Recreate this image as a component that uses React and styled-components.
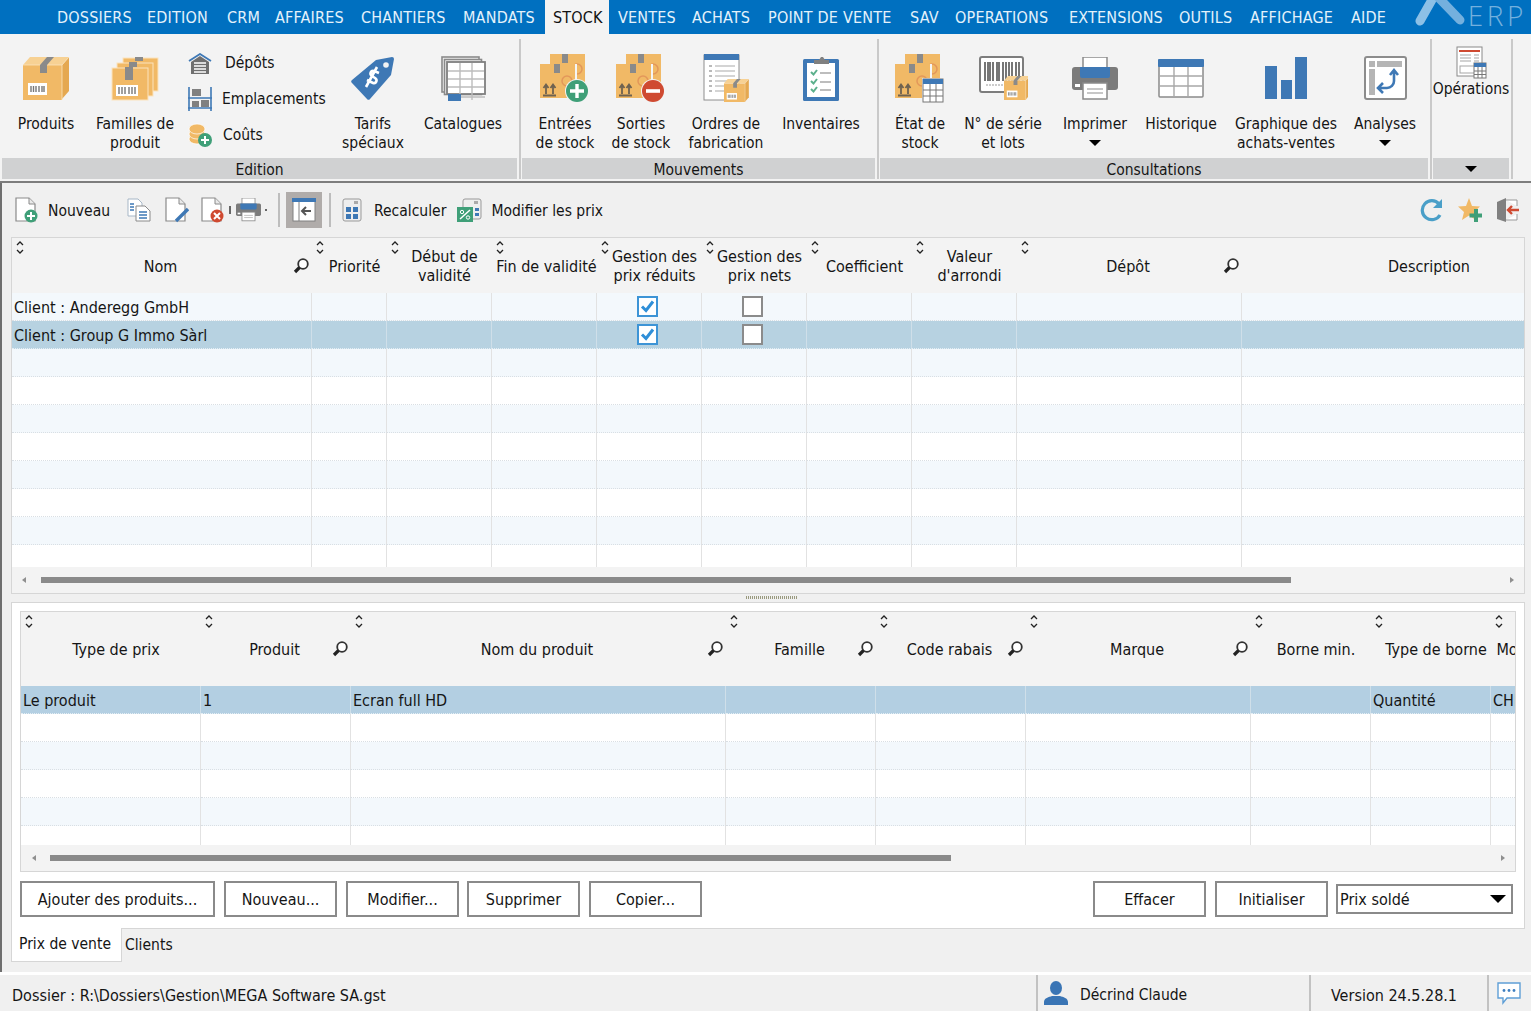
import React from "react";
import styled, { createGlobalStyle } from "styled-components";

const Global = createGlobalStyle`
  html, body { margin: 0; padding: 0; height: 100%; overflow: hidden; background: #f0f0f0; }
  * { box-sizing: border-box; }
  body {
    font-family: "DejaVu Sans Condensed", "DejaVu Sans", sans-serif;
    font-stretch: condensed;
    font-size: 16px;
    color: #151515;
  }
`;

const Page = styled.div`
  width: 1531px;
  height: 1011px;
  display: flex;
  flex-direction: column;
  overflow: hidden;
`;

const MenuBar = styled.nav`
  height: 34px;
  flex: none;
  background: #0070c0;
  display: flex;
  padding-left: 50px;
  overflow: hidden;
`;
const MenuItem = styled.div`
  flex: none;
  width: ${(p) => p.$w}px;
  padding-left: ${(p) => (p.$active ? 8 : 7)}px;
  margin-right: ${(p) => (p.$active ? 2 : 0)}px;
  line-height: 36px;
  letter-spacing: 0.2px;
  white-space: nowrap;
  color: ${(p) => (p.$active ? "#111" : "#e4f2fb")};
  background: ${(p) => (p.$active ? "#f3f3f3" : "transparent")};
`;
const Logo = styled.div`
  margin-left: auto;
  height: 34px;
  display: flex;
  align-items: flex-start;
  overflow: hidden;
  padding-right: 4px;
  color: #74b0de;
`;
const LogoText = styled.span`
  font-family: "Open Sans", sans-serif;
  font-stretch: normal;
  font-size: 28px;
  line-height: 31px;
  font-weight: 300;
  letter-spacing: 3.6px;
`;

const Ribbon = styled.div`
  height: 149px;
  flex: none;
  background: #f3f3f3;
  display: flex;
  padding: 0 0 2px 2px;
  border-bottom: 2px solid #7d7d7d;
  font-size: 15.5px;
`;
const Group = styled.section`
  display: flex;
  flex-direction: column;
  width: ${(p) => p.$w}px;
  margin-right: 2px;
  flex: none;
`;
const Separator = styled.i`
  display: block;
  width: 2px;
  height: 140px;
  margin: 5px 1px 0 0;
  background: #c9c9c9;
  flex: none;
`;
const GroupBody = styled.div`
  height: 124px;
  display: flex;
  padding-left: ${(p) => p.$pl || 0}px;
`;
const GroupCaption = styled.div`
  height: 21px;
  background: #d0d1d2;
  text-align: center;
  line-height: 24px;
`;
const Item = styled.div`
  width: ${(p) => p.$w}px;
  flex: none;
  display: flex;
  flex-direction: column;
  align-items: center;
  padding-top: ${(p) => (p.$top ? 12 : 20)}px;
`;
const IconSlot = styled.div`
  height: ${(p) => (p.$h ? p.$h : 48)}px;
  display: flex;
  align-items: center;
  justify-content: center;
  margin-bottom: ${(p) => (p.$h ? 1 : 13)}px;
`;
const ItemLabel = styled.div`
  text-align: center;
  line-height: 19px;
  white-space: pre-line;
`;
const Caret = styled.span`
  display: block;
  width: 0;
  height: 0;
  margin: ${(p) => p.$m || "6px auto 0"};
  border-left: 6px solid transparent;
  border-right: 6px solid transparent;
  border-top: 6px solid #000;
`;
const Stack = styled.div`
  width: 153px;
  flex: none;
  padding: 11px 0 0 8px;
  display: flex;
  flex-direction: column;
`;
const StackRow = styled.div`
  height: 36px;
  display: flex;
  align-items: center;
`;
const StackIcon = styled.div`
  width: 24px;
  display: flex;
  justify-content: center;
  margin-right: ${(p) => p.$mr}px;
`;

const Main = styled.main`
  flex: 1;
  min-height: 0;
  border-left: 2px solid #6f6f6f;
  padding: 0 6px 0 9px;
  display: flex;
  flex-direction: column;
  background: #f0f0f0;
`;
const Toolbar = styled.div`
  height: 54px;
  flex: none;
  display: flex;
  align-items: center;
  padding: 0 5px 0 4px;
  font-size: 15.5px;
`;
const ToolIcon = styled.div`
  display: flex;
  align-items: center;
  justify-content: center;
  flex: none;
  width: ${(p) => p.$w}px;
  margin-left: ${(p) => (p.$auto ? "auto" : `${p.$ml || 0}px`)};
`;
const ToolText = styled.span`
  margin-left: ${(p) => p.$ml}px;
  padding-top: 2px;
  white-space: nowrap;
`;
const ToolSep = styled.i`
  display: block;
  flex: none;
  width: 2px;
  height: ${(p) => p.$h || 34}px;
  margin-left: ${(p) => p.$ml}px;
  background: ${(p) => p.$c || "#bdbdbd"};
`;
const ToolActive = styled.div`
  flex: none;
  width: 36px;
  height: 36px;
  margin-left: ${(p) => p.$ml}px;
  background: #b0acaa;
  display: flex;
  align-items: center;
  justify-content: center;
`;

const GridFrame = styled.div`
  border: 1px solid #d6d6d6;
  background: #f3f3f3;
  overflow: hidden;
  flex: none;
  height: ${(p) => p.$h}px;
  display: flex;
  flex-direction: column;
`;
const GridRow = styled.div`
  display: grid;
  grid-template-columns: ${(p) => p.$cols};
  flex: none;
`;
const HeadCell = styled.div`
  position: relative;
  height: ${(p) => p.$h}px;
  padding: 0 ${(p) => (p.$search ? 13 : 0)}px 0 ${(p) => p.$pl || 10}px;
  display: flex;
  align-items: center;
  justify-content: center;
  text-align: center;
  line-height: 19px;
  white-space: pre;
  background: #f3f3f3;
`;
const HeadLabel = styled.span`
  position: relative;
  top: ${(p) => (p.$shift ? 1 : 0)}px;
`;
const SortMark = styled.svg`
  position: absolute;
  left: 4px;
  top: 3px;
`;
const SearchMark = styled.svg`
  position: absolute;
  right: 3px;
  top: 50%;
  margin-top: -8px;
`;
const Rows = styled.div`
  height: ${(p) => p.$h}px;
  overflow: hidden;
  flex: none;
`;
const Cell = styled.div`
  height: 28px;
  line-height: 30px;
  padding: ${(p) => (p.$center ? "0 4px 0 0" : "0 0 0 2px")};
  white-space: nowrap;
  overflow: hidden;
  display: flex;
  align-items: ${(p) => (p.$center ? "center" : "flex-start")};
  justify-content: ${(p) => (p.$center ? "center" : "flex-start")};
  border-right: 1px solid ${(p) => (p.$sel ? "#cfdfe9" : "#e2e2e2")};
  border-bottom: 1px dotted ${(p) => (p.$sel ? "#e4eef4" : "#d9dfe4")};
  background: ${(p) => (p.$sel ? p.$sel : p.$alt ? "#f3f8fc" : "#ffffff")};
`;
const Check = styled.span`
  width: 21px;
  height: 21px;
  display: block;
  background: #fff;
  border: 2px solid ${(p) => (p.$on ? "#3d94d6" : "#8b8b8b")};
`;
const ScrollRow = styled.div`
  flex: 1;
  display: flex;
  align-items: center;
  padding: 0 ${(p) => p.$pr}px 0 ${(p) => p.$pl}px;
  background: #f3f3f3;
`;
const ScrollTrack = styled.div`
  flex: 1;
  height: 6px;
  margin: 0 ${(p) => p.$mr}px 0 ${(p) => p.$ml}px;
`;
const ScrollThumb = styled.div`
  width: ${(p) => p.$w}px;
  height: 6px;
  background: #8a8a8a;
`;
const Arrow = styled.span`
  width: 0;
  height: 0;
  border-top: 3px solid transparent;
  border-bottom: 3px solid transparent;
  border-${(p) => (p.$left ? "right" : "left")}: 4px solid #8f8f8f;
`;
const Splitter = styled.div`
  height: 8px;
  flex: none;
  display: flex;
  justify-content: center;
`;
const Grip = styled.span`
  width: 52px;
  height: 3px;
  margin: 2px 0 0 7px;
  background: repeating-linear-gradient(90deg, #9a9a7f 0 1px, transparent 1px 2px);
`;

const Panel = styled.div`
  height: 327px;
  flex: none;
  border: 1px solid #d6d6d6;
  background: #fff;
  padding: 8px 8px 0 8px;
  display: flex;
  flex-direction: column;
`;
const Actions = styled.div`
  display: flex;
  margin-top: 9px;
  align-items: flex-start;
`;
const Btn = styled.button`
  font: inherit;
  font-stretch: condensed;
  color: #151515;
  width: ${(p) => p.$w}px;
  height: 36px;
  margin-right: ${(p) => p.$mr}px;
  margin-left: ${(p) => p.$ml || 0}px;
  background: #fff;
  border: 2px solid #8a8a8a;
  padding: 0;
  flex: none;
`;
const Select = styled.div`
  width: 177px;
  height: 30px;
  flex: none;
  margin-top: 3px;
  background: #fff;
  border: 2px solid #8a8a8a;
  padding: 0 5px 0 2px;
  display: flex;
  align-items: center;
  justify-content: space-between;
`;
const SelectCaret = styled.span`
  width: 0;
  height: 0;
  border-left: 8px solid transparent;
  border-right: 8px solid transparent;
  border-top: 8px solid #000;
`;
const Tabs = styled.div`
  flex: 1;
  display: flex;
  align-items: flex-start;
  font-size: 15.5px;
`;
const Tab = styled.div`
  height: ${(p) => (p.$active ? 34 : 32)}px;
  line-height: 32px;
  padding: ${(p) => (p.$active ? "0 0 0 7px" : "0 0 0 3px")};
  margin-top: ${(p) => (p.$active ? "-1px" : 0)};
  background: ${(p) => (p.$active ? "#fff" : "transparent")};
  border: ${(p) => (p.$active ? "1px solid #d6d6d6" : "none")};
  border-top: none;
  ${(p) => p.$active && "width: 111px; white-space: nowrap;"}
`;

const StatusBar = styled.footer`
  height: 39px;
  flex: none;
  border-top: 3px solid #fff;
  background: #f0f0f0;
  display: flex;
  align-items: center;
  padding-left: 12px;
`;
const StatusCell = styled.div`
  height: 36px;
  flex: none;
  width: ${(p) => p.$w}px;
  display: flex;
  align-items: center;
  padding-left: ${(p) => p.$pl}px;
  gap: 12px;
  border-left: 2px solid #c2c2c2;
  white-space: nowrap;
`;
const StatusPath = styled.div`
  flex: none;
  width: 1024px;
  padding-top: 4px;
  white-space: nowrap;
`;
const StatusText = styled.span`
  padding-top: 4px;
  font-size: ${(p) => p.$size || 16}px;
`;

const Z = { o: "#f1b966", ol: "#f7d193", od: "#e5a850", g: "#8a8a8a", b: "#3e78b5", gr: "#3f9f78", r: "#cf4a31" };

function Svg({ w, h, children, vb }) {
  return (
    <svg width={w} height={h} viewBox={vb || `0 0 ${w} ${h}`} style={{ display: "block" }}>
      {children}
    </svg>
  );
}

function Carton({ x = 0, y = 0, s = 1 }) {
  return (
    <g transform={`translate(${x} ${y}) scale(${s})`}>
      <path fill={Z.ol} d="M0 8 7 0h39l-7 8z" />
      <path fill={Z.od} d="M39 8l7-8v34l-7 8z" />
      <rect y="8" width="39" height="35" fill={Z.o} />
      <path stroke="#fbe3bd" strokeWidth=".8" fill="none" d="M0 8h39l7-8M39 8v35" />
      <path fill={Z.g} d="M17 8l7-8h7l-7 8v8h-7z" />
      <rect x="5" y="26" width="19" height="12" fill="#fff" />
      <path stroke="#777" strokeWidth="1.400" d="M8 29v6M10.500 29v6M13 29v6M16 29v6M19 29v6M21 29v6" />
    </g>
  );
}
const ProductIcon = () => (
  <Svg w={48} h={48}>
    <Carton x={1} y={3} />
  </Svg>
);
const FamilyIcon = () => (
  <Svg w={50} h={48}>
    <rect x="13" y="4" width="35" height="33" fill={Z.o} stroke="#fbe3bd" />
    <rect x="25" y="3" width="8" height="4" fill={Z.g} />
    <rect x="7" y="9" width="36" height="33" fill={Z.o} stroke="#fbe3bd" />
    <rect x="19" y="8" width="8" height="5" fill={Z.g} />
    <rect x="2" y="14" width="36" height="32" fill={Z.o} stroke="#fbe3bd" />
    <rect x="15" y="13" width="8" height="13" fill={Z.g} />
    <rect x="6" y="31" width="22" height="11" fill="#fff" />
    <path stroke="#777" strokeWidth="1.400" d="M9 33v7M12 33v7M15 33v7M19 33v7M22 33v7M25 33v7" />
  </Svg>
);
function TwinBoxes() {
  return (
    <g>
      <rect x="10" y="0" width="35" height="35" fill={Z.o} />
      <rect x="22" y="0" width="6" height="9" fill={Z.g} />
      <circle cx="37" cy="15" r="5" fill="none" stroke="#e3975a" strokeWidth="1.500" />
      <rect x="0" y="10" width="37" height="35" fill="#f5f5f5" />
      <rect x="0" y="10" width="35" height="34" fill={Z.o} />
      <rect x="14" y="10" width="6" height="9" fill={Z.g} />
      <circle cx="27" cy="27" r="5" fill="none" stroke="#e3975a" strokeWidth="1.500" />
      <path stroke="#6f6250" strokeWidth="1.800" fill="none" d="M6 40V31M3.500 34 6 30.500 8.500 34M13 40V31M10.500 34 13 30.500 15.500 34M3 41.500h13" />
    </g>
  );
}
const EntryIcon = () => (
  <Svg w={50} h={49}>
    <TwinBoxes />
    <circle cx="37" cy="37" r="12" fill="#f3f3f3" />
    <circle cx="37" cy="37" r="11" fill={Z.gr} />
    <path stroke="#fff" strokeWidth="3.400" d="M37 30v14M30 37h14" />
  </Svg>
);
const ExitIcon = () => (
  <Svg w={50} h={49}>
    <TwinBoxes />
    <circle cx="37" cy="37" r="12" fill="#f3f3f3" />
    <circle cx="37" cy="37" r="11" fill={Z.r} />
    <path stroke="#fff" strokeWidth="3.600" d="M30 37h14" />
  </Svg>
);
const StateIcon = () => (
  <Svg w={50} h={49}>
    <TwinBoxes />
    <rect x="27" y="24" width="23" height="25" fill="#f3f3f3" />
    <rect x="28" y="25" width="20" height="23" fill="#fff" stroke="#777" />
    <rect x="28" y="25" width="20" height="5" fill={Z.b} />
    <path stroke="#777" d="M35 30v18M41 30v18M28 36h20M28 42h20" />
  </Svg>
);
const OrdersIcon = () => (
  <Svg w={46} h={48}>
    <rect x="1" y="1" width="35" height="45" fill="#fff" stroke="#8e8e8e" />
    <rect x="1" y="0" width="35" height="6" fill={Z.b} />
    <path stroke="#777" strokeWidth="1.200" d="M6 12h3M6 17h3M6 22h3M6 27h3M6 32h3M6 37h3" />
    <path stroke="#aaa" strokeWidth="1.200" d="M12 12h20M12 17h20M12 22h20M12 27h12M12 32h10M12 37h10" />
    <Carton x={21} y={25} s={0.54} />
  </Svg>
);
const ClipboardIcon = () => (
  <Svg w={37} h={45}>
    <rect x="0" y="3" width="36" height="42" rx="1.500" fill={Z.b} />
    <rect x="4" y="7" width="28" height="34" fill="#fff" />
    <path fill="#808080" d="M11 8V4h5l2-3h2l2 3h4v4z" />
    <path stroke="#5cb08c" strokeWidth="2" fill="none" d="M8 16l2.500 2.500L14 14M8 25l2.500 2.500L14 23M8 33l2.500 2.500L14 31" />
    <path stroke="#a8a8a8" strokeWidth="1.400" d="M17 17h11M17 26h11M17 34h11" />
  </Svg>
);
const BarcodeIcon = () => (
  <Svg w={49} h={44}>
    <rect x="1" y="1" width="43" height="35" rx="2" fill="#fff" stroke="#7d7d7d" strokeWidth="2" />
    <path stroke="#3d3d3d" strokeWidth="1.400" d="M6 6v19M9 6v19M11 6v19M14 6v19M18 6v19M20 6v19M24 6v19M27 6v19M30 6v19M33 6v19M37 6v19M40 6v19" />
    <path stroke="#9a9a9a" strokeWidth="1.200" d="M7 29h24" strokeDasharray="2 1" />
    <Carton x={25} y={20} s={0.56} />
  </Svg>
);
const PrinterIcon = ({ s = 46 }) => (
  <Svg w={s} h={(s * 43) / 46} vb="0 0 46 43">
    <rect x="11" y="0" width="24" height="14" fill="#fff" stroke="#8a8a8a" strokeWidth="1.500" />
    <rect x="0" y="10" width="46" height="23" rx="3" fill="#7b7b7b" />
    <path fill={Z.b} d="M8 10h30v9a2 2 0 0 1-2 2H10a2 2 0 0 1-2-2z" />
    <rect x="3" y="27" width="5" height="3" fill="#fff" />
    <rect x="11" y="26" width="24" height="16" fill="#fff" stroke="#8a8a8a" strokeWidth="1.500" />
    <path stroke="#b5b5b5" strokeWidth="1.500" d="M15 32h16M15 36h16" />
  </Svg>
);
const TableIcon = () => (
  <Svg w={46} h={39}>
    <rect x="1" y="1" width="44" height="37" rx="1" fill="#fff" stroke="#8a8a8a" strokeWidth="1.500" />
    <rect x="0" y="0" width="46" height="8" rx="1" fill={Z.b} />
    <path stroke="#a8a8a8" strokeWidth="1.400" d="M16 8v30M30 8v30M1 17h44M1 27h44" />
  </Svg>
);
const BarsIcon = () => (
  <Svg w={42} h={42}>
    <rect x="0" y="9" width="12" height="33" fill={Z.b} />
    <rect x="16" y="23" width="11" height="19" fill={Z.b} />
    <rect x="30" y="0" width="12" height="42" fill={Z.b} />
  </Svg>
);
const AnalysisIcon = () => (
  <Svg w={43} h={44}>
    <rect x="1" y="1" width="41" height="42" rx="2" fill="#fff" stroke="#8c8c8c" strokeWidth="2" />
    <rect x="5" y="5" width="6" height="6" fill="#b5b5b5" />
    <rect x="13" y="5" width="25" height="6" fill="#b5b5b5" />
    <rect x="5" y="13" width="6" height="26" fill="#b5b5b5" />
    <path fill="none" stroke={Z.b} strokeWidth="2.600" d="M30 15v10a7 7 0 0 1-7 7H15M26 19l4-5 4 5M19 27l-5 5 5 5" />
  </Svg>
);
const CatalogIcon = () => (
  <Svg w={45} h={45}>
    <rect x="1" y="1" width="37" height="35" fill="#f3f3f3" stroke="#8a8a8a" strokeWidth="1.600" />
    <rect x="3.500" y="3.500" width="37" height="35" fill="#f3f3f3" stroke="#8a8a8a" strokeWidth="1.600" />
    <rect x="6" y="6" width="38" height="32" fill="#fff" stroke="#7f7f7f" strokeWidth="1.800" />
    <path stroke="#bdbdbd" strokeWidth="1.400" d="M19 7v31M31 7v31M7 15h36M7 23h36M7 31h36" />
    <rect x="7" y="38" width="13" height="7" fill={Z.b} />
    <path stroke="#bdbdbd" strokeWidth="1.400" d="M20 41h24M31 38v6" />
  </Svg>
);
const TagIcon = () => (
  <Svg w={44} h={44}>
    <path fill={Z.b} d="M25 4 41 1a2 2 0 0 1 2 2l-3 16-21 24a2 2 0 0 1-3 0L1 27a2 2 0 0 1 0-3z" />
    <circle cx="35" cy="9" r="2.800" fill="#f3f3f3" />
    <path fill="none" stroke="#fff" strokeWidth="2.600" d="M28 17l-5-2c-3-1-5 3-2 5l3 2c3 2 1 6-2 5l-6-3M26 11 15 31" />
  </Svg>
);
const OperationsIcon = () => (
  <Svg w={31} h={33}>
    <rect x="1" y="1" width="25" height="29" fill="#fff" stroke="#8a8a8a" />
    <rect x="3" y="4" width="21" height="2" fill={Z.r} />
    <path stroke="#a5a5a5" d="M4 9h11M4 12h11M4 15h11M18 9h5M18 12h5M18 15h5" />
    <rect x="4" y="20" width="15" height="7" fill="#fff" stroke="#a5a5a5" />
    <rect x="18" y="17" width="12" height="15" fill="#fff" stroke="#777" />
    <rect x="18" y="17" width="12" height="4" fill={Z.b} />
    <path stroke="#777" d="M22 21v11M26 21v11M18 25h12M18 28.500h12" />
  </Svg>
);
const DepotIcon = () => (
  <Svg w={24} h={21}>
    <path fill="none" stroke={Z.b} strokeWidth="1.800" d="M1 8 12 1l11 7" />
    <path fill="#6f6f6f" d="M3 9l9-6 9 6v12H3z" />
    <path stroke="#fff" strokeWidth="1.400" d="M6 10h12M6 13h12M6 16h12M6 19h12" />
  </Svg>
);
const ShelfIcon = () => (
  <Svg w={24} h={24}>
    <path stroke={Z.b} strokeWidth="1.600" fill="none" d="M1 0v24M23 0v24M0 11h24M0 21h24" />
    <rect x="4" y="2" width="9" height="7" fill="#808080" />
    <rect x="4" y="14" width="7" height="6" fill="#808080" />
    <rect x="13" y="13" width="8" height="7" fill="#808080" />
  </Svg>
);
const CoinsIcon = () => (
  <Svg w={24} h={24}>
    <g fill={Z.o} stroke="#fff" strokeWidth=".7">
      <ellipse cx="9" cy="16" rx="8" ry="5" />
      <ellipse cx="9" cy="11" rx="8" ry="5" />
      <ellipse cx="9" cy="6" rx="8" ry="5" />
    </g>
    <circle cx="17" cy="17" r="7" fill={Z.gr} />
    <path stroke="#fff" strokeWidth="2" d="M17 13v8M13 17h8" />
  </Svg>
);

function Sheet() {
  return (
    <>
      <path fill="#fff" stroke="#8a8a8a" strokeWidth="1.200" d="M1 1h13l6 6v17H1z" />
      <path fill="#e9e9e9" stroke="#8a8a8a" d="M14 1v6h6" />
    </>
  );
}
const NewIcon = () => (
  <Svg w={24} h={26}>
    <Sheet />
    <circle cx="16" cy="19" r="6.500" fill={Z.gr} />
    <path stroke="#fff" strokeWidth="2" d="M16 15v8M12 19h8" />
  </Svg>
);
const CopyIcon = () => (
  <Svg w={24} h={24}>
    <path fill="#fff" stroke="#a7b7c7" d="M1 1h10l4 4v13H1z" />
    <path stroke={Z.b} strokeWidth="1.300" d="M3 6h4M3 9h4M3 12h4" />
    <path fill="#fff" stroke="#8a8a8a" d="M9 8h9l5 5v10H9z" />
    <path stroke={Z.b} strokeWidth="1.400" d="M12 14h8M12 17h8M12 20h8" />
  </Svg>
);
const EditIcon = () => (
  <Svg w={24} h={26}>
    <Sheet />
    <path stroke={Z.b} strokeWidth="3.400" d="M11 24 23 12" />
  </Svg>
);
const DeleteIcon = () => (
  <Svg w={24} h={26}>
    <Sheet />
    <circle cx="16" cy="19" r="6.500" fill={Z.r} />
    <path stroke="#fff" strokeWidth="2" d="M13 16l6 6M19 16l-6 6" />
  </Svg>
);
const BackIcon = () => (
  <Svg w={24} h={24}>
    <rect x="1" y="1" width="22" height="22" fill="#fff" stroke="#808080" />
    <rect x="0" y="0" width="24" height="4" fill={Z.b} />
    <path stroke="#808080" d="M7 4v19" />
    <path stroke="#555" strokeWidth="2" fill="none" d="M19 13h-9M14 9l-4 4 4 4" />
  </Svg>
);
const CalcIcon = () => (
  <Svg w={20} h={24}>
    <rect x="1" y="1" width="18" height="22" rx="2" fill="#eee" stroke="#999" />
    <rect x="12" y="3" width="4" height="3" fill="#aaa" />
    <rect x="4" y="9" width="5" height="5" fill={Z.b} />
    <rect x="11" y="9" width="5" height="5" fill={Z.b} />
    <rect x="4" y="16" width="5" height="5" fill={Z.b} />
    <rect x="11" y="16" width="5" height="5" fill={Z.b} />
  </Svg>
);
const PercentIcon = () => (
  <Svg w={25} h={24}>
    <rect x="6" y="1" width="18" height="20" rx="2" fill="#eee" stroke="#999" />
    <rect x="17" y="3" width="4" height="3" fill="#aaa" />
    <rect x="18" y="10" width="4" height="3" fill={Z.b} />
    <rect x="18" y="15" width="4" height="3" fill={Z.b} />
    <rect x="0" y="9" width="16" height="15" fill={Z.gr} />
    <path stroke="#fff" strokeWidth="1.500" fill="none" d="M3 21 13 12" />
    <circle cx="5" cy="14" r="1.700" fill="none" stroke="#fff" />
    <circle cx="11" cy="19.500" r="1.700" fill="none" stroke="#fff" />
  </Svg>
);
const RefreshIcon = () => (
  <Svg w={24} h={24}>
    <path fill="none" stroke="#4a9fc8" strokeWidth="3.200" d="M20 17a9.500 9.500 0 1 1-1-11" />
    <path fill="#4a9fc8" d="M22 1v9h-9z" />
  </Svg>
);
const StarIcon = () => (
  <Svg w={25} h={25}>
    <path fill={Z.o} d="M11 0l3 8 8 .5-6 5.500 2 8-7-4.500L4 22l2-8-6-5.500L8 8z" />
    <path stroke={Z.gr} strokeWidth="4" d="M18 11v13M11.500 17.500h12.500" />
  </Svg>
);
const LeaveIcon = () => (
  <Svg w={24} h={24}>
    <path fill="#808080" d="M1 4l9-4v24l-9-3z" />
    <path fill="#fff" stroke="#999" d="M10 2h11v6M21 16v6H10" />
    <path stroke={Z.r} strokeWidth="2.400" fill="none" d="M23 12H12M16 8l-4 4 4 4" />
  </Svg>
);
const UserIcon = () => (
  <Svg w={24} h={24}>
    <ellipse cx="12" cy="7" rx="6" ry="7" fill="#3a75b5" />
    <path fill="#3a75b5" d="M0 24v-3c0-4 5-5 8-6h8c3 1 8 2 8 6v3z" />
  </Svg>
);
const ChatIcon = () => (
  <Svg w={24} h={23}>
    <path fill="#fff" stroke="#5f9fd6" strokeWidth="1.400" d="M1 1h22v15H10l-4 5v-5H1z" />
    <circle cx="7" cy="8.500" r="1.400" fill="#3f7fc0" />
    <circle cx="12" cy="8.500" r="1.400" fill="#3f7fc0" />
    <circle cx="17" cy="8.500" r="1.400" fill="#3f7fc0" />
  </Svg>
);
const CheckMark = () => (
  <Svg w={17} h={17}>
    <path fill="none" stroke="#2f8fd8" strokeWidth="3" d="M3 8.500l4 4 7-9" />
  </Svg>
);

const Sort = () => (
  <SortMark width="8" height="13" viewBox="0 0 8 13">
    <path fill="none" stroke="#222" strokeWidth="1.300" d="M1 4l3-3 3 3M1 9l3 3 3-3" />
  </SortMark>
);
const Search = () => (
  <SearchMark width="16" height="16" viewBox="0 0 16 16">
    <circle cx="10" cy="6" r="4.800" fill="#fff" stroke="#333" strokeWidth="1.800" />
    <path stroke="#222" strokeWidth="3.200" d="M6.500 9.500 2 14" />
  </SearchMark>
);

const menu = [
  ["DOSSIERS", 90], ["EDITION", 80], ["CRM", 48], ["AFFAIRES", 86], ["CHANTIERS", 102], ["MANDATS", 89],
  ["STOCK", 64], ["VENTES", 74], ["ACHATS", 76], ["POINT DE VENTE", 142], ["SAV", 45], ["OPERATIONS", 114],
  ["EXTENSIONS", 110], ["OUTILS", 71], ["AFFICHAGE", 101], ["AIDE", 50],
];

const topCols = "300px 75px 105px 105px 105px 105px 105px 105px 225px 364px";
const topHead = [
  ["Nom", true], ["Priorité"], ["Début de\nvalidité"], ["Fin de validité", false, 4], ["Gestion des\nprix réduits"],
  ["Gestion des\nprix nets"], ["Coefficient"], ["Valeur\nd'arrondi"], ["Dépôt", true], ["Description"],
];
const topRows = [
  { name: "Client : Anderegg GmbH", reduced: true },
  { name: "Client : Group G Immo Sàrl", reduced: true, sel: true },
  {}, {}, {}, {}, {}, {}, {}, {},
];

const botCols = "180px 150px 375px 150px 150px 225px 120px 120px 62px";
const botHead = [
  ["Type de prix"], ["Produit", true], ["Nom du produit", true], ["Famille", true], ["Code rabais", true],
  ["Marque", true], ["Borne min."], ["Type de borne"], ["Monnaie"],
];
const botRows = [
  { cells: ["Le produit", "1", "Ecran full HD", "", "", "", "", "Quantité", "CHF"], sel: true },
  { cells: [] }, { cells: [] }, { cells: [] }, { cells: [] }, { cells: [] },
];

export default function App() {
  return (
    <Page>
      <Global />
      <MenuBar>
        {menu.map(([m, w]) => (
          <MenuItem key={m} $w={w} $active={m === "STOCK"}>{m}</MenuItem>
        ))}
        <Logo>
          <svg width="56" height="34" viewBox="0 0 56 34">
            <path fill="none" stroke="#8cc0e6" strokeWidth="9" strokeLinecap="round" d="M8 21 21 -2" />
            <path fill="none" stroke="#74b0de" strokeWidth="9" strokeLinecap="round" d="M24 -5 48 20" />
          </svg>
          <LogoText>ERP</LogoText>
        </Logo>
      </MenuBar>

      <Ribbon>
        <Group $w={515}>
          <GroupBody>
            <Item $w={88}><IconSlot><ProductIcon /></IconSlot><ItemLabel>Produits</ItemLabel></Item>
            <Item $w={90}><IconSlot><FamilyIcon /></IconSlot><ItemLabel>Familles de{"\n"}produit</ItemLabel></Item>
            <Stack>
              <StackRow><StackIcon $mr={13}><DepotIcon /></StackIcon>Dépôts</StackRow>
              <StackRow><StackIcon $mr={10}><ShelfIcon /></StackIcon>Emplacements</StackRow>
              <StackRow><StackIcon $mr={11}><CoinsIcon /></StackIcon>Coûts</StackRow>
            </Stack>
            <Item $w={80}><IconSlot><TagIcon /></IconSlot><ItemLabel>Tarifs{"\n"}spéciaux</ItemLabel></Item>
            <Item $w={100}><IconSlot><CatalogIcon /></IconSlot><ItemLabel>Catalogues</ItemLabel></Item>
          </GroupBody>
          <GroupCaption>Edition</GroupCaption>
        </Group>
        <Separator />
        <Group $w={353}>
          <GroupBody $pl={5}>
            <Item $w={76}><IconSlot><EntryIcon /></IconSlot><ItemLabel>Entrées{"\n"}de stock</ItemLabel></Item>
            <Item $w={76}><IconSlot><ExitIcon /></IconSlot><ItemLabel>Sorties{"\n"}de stock</ItemLabel></Item>
            <Item $w={94}><IconSlot><OrdersIcon /></IconSlot><ItemLabel>Ordres de{"\n"}fabrication</ItemLabel></Item>
            <Item $w={96}><IconSlot><ClipboardIcon /></IconSlot><ItemLabel>Inventaires</ItemLabel></Item>
          </GroupBody>
          <GroupCaption>Mouvements</GroupCaption>
        </Group>
        <Separator />
        <Group $w={548}>
          <GroupBody>
            <Item $w={80}><IconSlot><StateIcon /></IconSlot><ItemLabel>État de{"\n"}stock</ItemLabel></Item>
            <Item $w={86}><IconSlot><BarcodeIcon /></IconSlot><ItemLabel>N° de série{"\n"}et lots</ItemLabel></Item>
            <Item $w={98}><IconSlot><PrinterIcon /></IconSlot><ItemLabel>Imprimer</ItemLabel><Caret /></Item>
            <Item $w={74}><IconSlot><TableIcon /></IconSlot><ItemLabel>Historique</ItemLabel></Item>
            <Item $w={136}><IconSlot><BarsIcon /></IconSlot><ItemLabel>Graphique des{"\n"}achats-ventes</ItemLabel></Item>
            <Item $w={62}><IconSlot><AnalysisIcon /></IconSlot><ItemLabel>Analyses</ItemLabel><Caret /></Item>
          </GroupBody>
          <GroupCaption>Consultations</GroupCaption>
        </Group>
        <Separator />
        <Group $w={76}>
          <GroupBody>
            <Item $w={76} $top><IconSlot $h={33}><OperationsIcon /></IconSlot><ItemLabel>Opérations</ItemLabel></Item>
          </GroupBody>
          <GroupCaption><Caret $m="8px auto 0" /></GroupCaption>
        </Group>
        <Separator />
      </Ribbon>

      <Main>
        <Toolbar>
          <ToolIcon $w={24}><NewIcon /></ToolIcon>
          <ToolText $ml={9}>Nouveau</ToolText>
          <ToolIcon $w={24} $ml={17}><CopyIcon /></ToolIcon>
          <ToolIcon $w={24} $ml={14}><EditIcon /></ToolIcon>
          <ToolIcon $w={24} $ml={12}><DeleteIcon /></ToolIcon>
          <ToolSep $ml={4} $h={8} $c="#666" />
          <ToolIcon $w={25} $ml={5}><PrinterIcon s={25} /></ToolIcon>
          <ToolSep $ml={4} $h={2} $c="#666" />
          <ToolSep $ml={11} />
          <ToolActive $ml={6}><BackIcon /></ToolActive>
          <ToolSep $ml={7} />
          <ToolIcon $w={20} $ml={11}><CalcIcon /></ToolIcon>
          <ToolText $ml={12}>Recalculer</ToolText>
          <ToolIcon $w={25} $ml={11}><PercentIcon /></ToolIcon>
          <ToolText $ml={9}>Modifier les prix</ToolText>
          <ToolIcon $w={24} $auto><RefreshIcon /></ToolIcon>
          <ToolIcon $w={25} $ml={14}><StarIcon /></ToolIcon>
          <ToolIcon $w={24} $ml={13}><LeaveIcon /></ToolIcon>
        </Toolbar>

        <GridFrame $h={357}>
          <GridRow $cols={topCols}>
            {topHead.map(([label, search, pl]) => (
              <HeadCell key={label} $h={55} $search={search} $pl={pl}>
                {label !== "Description" && <Sort />}
                <HeadLabel $shift={!label.includes("\n")}>{label}</HeadLabel>
                {search && <Search />}
              </HeadCell>
            ))}
          </GridRow>
          <Rows $h={274}>
            {topRows.map((r, i) => (
              <GridRow key={i} $cols={topCols}>
                {topHead.map(([label], c) => (
                  <Cell key={label} $alt={i % 2 === 0} $sel={r.sel && "#b7d2e1"} $center={(c === 4 || c === 5) && r.name}>
                    {c === 0 && r.name}
                    {c === 4 && r.name && <Check $on><CheckMark /></Check>}
                    {c === 5 && r.name && <Check />}
                  </Cell>
                ))}
              </GridRow>
            ))}
          </Rows>
          <ScrollRow $pl={10} $pr={10}>
            <Arrow $left />
            <ScrollTrack $ml={15} $mr={15}><ScrollThumb $w={1250} /></ScrollTrack>
            <Arrow />
          </ScrollRow>
        </GridFrame>

        <Splitter><Grip /></Splitter>

        <Panel>
          <GridFrame $h={261}>
            <GridRow $cols={botCols}>
              {botHead.map(([label, search]) => (
                <HeadCell key={label} $h={74} $search={search}>
                  <Sort />
                  <HeadLabel>{label}</HeadLabel>
                  {search && <Search />}
                </HeadCell>
              ))}
            </GridRow>
            <Rows $h={159}>
              {botRows.map((r, i) => (
                <GridRow key={i} $cols={botCols}>
                  {botHead.map(([label], c) => (
                    <Cell key={label} $alt={i % 2 === 0} $sel={r.sel && "#b3cfe2"}>{r.cells[c]}</Cell>
                  ))}
                </GridRow>
              ))}
            </Rows>
            <ScrollRow $pl={11} $pr={10}>
              <Arrow $left />
              <ScrollTrack $ml={14} $mr={15}><ScrollThumb $w={901} /></ScrollTrack>
              <Arrow />
            </ScrollRow>
          </GridFrame>
          <Actions>
            <Btn $w={195} $mr={9}>Ajouter des produits...</Btn>
            <Btn $w={113} $mr={9}>Nouveau...</Btn>
            <Btn $w={113} $mr={8}>Modifier...</Btn>
            <Btn $w={113} $mr={9}>Supprimer</Btn>
            <Btn $w={113} $mr={9}>Copier...</Btn>
            <Btn $w={113} $mr={9} $ml={382}>Effacer</Btn>
            <Btn $w={113} $mr={8}>Initialiser</Btn>
            <Select>Prix soldé<SelectCaret /></Select>
          </Actions>
        </Panel>

        <Tabs>
          <Tab $active>Prix de vente</Tab>
          <Tab>Clients</Tab>
        </Tabs>
      </Main>

      <StatusBar>
        <StatusPath>Dossier : R:\Dossiers\Gestion\MEGA Software SA.gst</StatusPath>
        <StatusCell $w={273} $pl={6}><UserIcon /><StatusText $size={15.5}>Décrind Claude</StatusText></StatusCell>
        <StatusCell $w={178} $pl={20}><StatusText>Version 24.5.28.1</StatusText></StatusCell>
        <StatusCell $w={43} $pl={8}><ChatIcon /></StatusCell>
      </StatusBar>
    </Page>
  );
}
